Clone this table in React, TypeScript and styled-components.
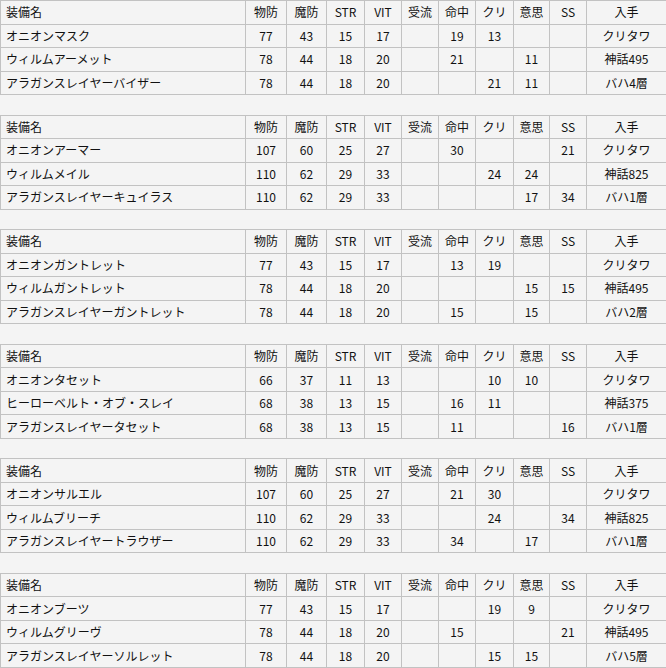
import React from "react";
import styled, { createGlobalStyle } from "styled-components";

const GlobalStyle = createGlobalStyle`
    html, body {
        margin: 0;
        padding: 0;
        background: #f4f4f4;
    }
`

const Page = styled.div`
    width: 666px;
    font-family: "Noto Sans CJK JP", "DejaVu Sans", sans-serif;
    font-size: 12px;
    color: #111;
`

const Table = styled.table`
    width: 666px;
    border-collapse: collapse;
    table-layout: fixed;
    margin-bottom: 19.6px;
`

const Cell = styled.td<{ $left?: boolean }>`
    border: 1px solid #c2c2c2;
    height: 22.5px;
    padding: 0 5px;
    line-height: 22px;
    text-align: ${props => props.$left ? "left" : "center"};
    white-space: nowrap;
    overflow: hidden;
`

const HeadCell = styled(Cell).attrs({ as: "th" })`
    font-weight: normal;
`

const columns = ["物防", "魔防", "STR", "VIT", "受流", "命中", "クリ", "意思", "SS", "入手"];
const widths = [245, 41, 40, 38, 37, 37, 37, 38, 36, 37, 80];

type Row = [string, ...(string | number)[]];

const tables: Row[][] = [
    [
        ["オニオンマスク", 77, 43, 15, 17, "", 19, 13, "", "", "クリタワ"],
        ["ウィルムアーメット", 78, 44, 18, 20, "", 21, "", 11, "", "神話495"],
        ["アラガンスレイヤーバイザー", 78, 44, 18, 20, "", "", 21, 11, "", "バハ4層"],
    ],
    [
        ["オニオンアーマー", 107, 60, 25, 27, "", 30, "", "", 21, "クリタワ"],
        ["ウィルムメイル", 110, 62, 29, 33, "", "", 24, 24, "", "神話825"],
        ["アラガンスレイヤーキュイラス", 110, 62, 29, 33, "", "", "", 17, 34, "バハ1層"],
    ],
    [
        ["オニオンガントレット", 77, 43, 15, 17, "", 13, 19, "", "", "クリタワ"],
        ["ウィルムガントレット", 78, 44, 18, 20, "", "", "", 15, 15, "神話495"],
        ["アラガンスレイヤーガントレット", 78, 44, 18, 20, "", 15, "", 15, "", "バハ2層"],
    ],
    [
        ["オニオンタセット", 66, 37, 11, 13, "", "", 10, 10, "", "クリタワ"],
        ["ヒーローベルト・オブ・スレイ", 68, 38, 13, 15, "", 16, 11, "", "", "神話375"],
        ["アラガンスレイヤータセット", 68, 38, 13, 15, "", 11, "", "", 16, "バハ1層"],
    ],
    [
        ["オニオンサルエル", 107, 60, 25, 27, "", 21, 30, "", "", "クリタワ"],
        ["ウィルムブリーチ", 110, 62, 29, 33, "", "", 24, "", 34, "神話825"],
        ["アラガンスレイヤートラウザー", 110, 62, 29, 33, "", 34, "", 17, "", "バハ1層"],
    ],
    [
        ["オニオンブーツ", 77, 43, 15, 17, "", "", 19, 9, "", "クリタワ"],
        ["ウィルムグリーヴ", 78, 44, 18, 20, "", 15, "", "", 21, "神話495"],
        ["アラガンスレイヤーソルレット", 78, 44, 18, 20, "", "", 15, 15, "", "バハ5層"],
    ],
];

const EquipTable = ({ rows }: { rows: Row[] }) => (
    <Table>
        <colgroup>
            {widths.map((w, i) => <col key={i} style={{ width: w }} />)}
        </colgroup>
        <thead>
            <tr>
                <HeadCell $left>装備名</HeadCell>
                {columns.map(c => <HeadCell key={c}>{c}</HeadCell>)}
            </tr>
        </thead>
        <tbody>
            {rows.map(row => (
                <tr key={row[0]}>
                    {row.map((value, i) => (
                        <Cell key={i} $left={i === 0}>{value}</Cell>
                    ))}
                </tr>
            ))}
        </tbody>
    </Table>
)

export const App = () => (
    <Page>
        <GlobalStyle />
        {tables.map((rows, i) => <EquipTable key={i} rows={rows} />)}
    </Page>
)

export default App;
